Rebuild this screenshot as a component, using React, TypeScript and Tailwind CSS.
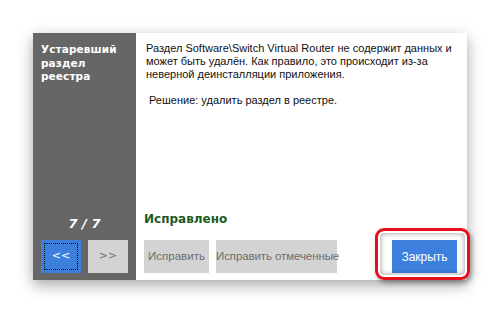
export default function App() {
  return (
    <div
      className="relative w-[500px] h-[313px] bg-white overflow-hidden"
      style={{ fontFamily: '"DejaVu Sans", Tahoma, sans-serif' }}
    >
      <div className="absolute left-[33px] top-[33px] w-[434px] h-[247px] flex shadow-[0_5px_14px_rgba(0,0,0,0.35)]">
        <div className="w-[103px] bg-[#666666] flex flex-col px-[8px] pb-[7px] pt-[10px]">
          <div className="text-white font-bold text-[10.5px] leading-[13.5px] tracking-[0.1px]">
            Устаревший
            <br />
            раздел
            <br />
            реестра
          </div>
          <div className="flex-1" />
          <div className="text-white font-bold italic text-[13px] text-center mb-[9px] leading-[14px]">
            7 / 7
          </div>
          <div className="flex gap-[7px]">
            <button className="w-[41px] h-[33px] bg-[#3d7fdc] p-[3px]">
              <div className="w-full h-full border border-dotted border-black flex items-center justify-center text-white text-[11px]">
                &lt;&lt;
              </div>
            </button>
            <button className="w-[41px] h-[33px] bg-[#d3d3d3] flex items-center justify-center text-[#707070] text-[11px]">
              &gt;&gt;
            </button>
          </div>
        </div>
        <div className="flex-1 bg-white flex flex-col pl-[8px] pr-[10px] pb-[7px] pt-[9px]">
          <div
            className="pl-[2px] text-[#111] text-[11px] leading-[13px]"
            style={{ fontFamily: '"Liberation Sans", Tahoma, sans-serif' }}
          >
            Раздел Software\Switch Virtual Router не содержит данных и
            <br />
            может быть удалён. Как правило, это происходит из-за
            <br />
            неверной деинсталляции приложения.
            <br />
            <br />
            <span className="pl-[3px]">Решение: удалить раздел в реестре.</span>
          </div>
          <div className="flex-1" />
          <div className="text-[#1c5a1c] font-bold text-[12px] leading-[14px] mb-[14px]">
            Исправлено
          </div>
          <div className="flex items-end">
            <button
              className="w-[65px] h-[33px] bg-[#d3d3d3] text-[#6e6e6e] text-[11.5px]"
              style={{ fontFamily: '"Liberation Sans", Tahoma, sans-serif' }}
            >
              Исправить
            </button>
            <button
              className="ml-[7px] w-[121px] h-[33px] bg-[#d3d3d3] text-[#6e6e6e] text-[11.5px] whitespace-nowrap tracking-[-0.1px]"
              style={{ fontFamily: '"Liberation Sans", Tahoma, sans-serif' }}
            >
              Исправить отмеченные
            </button>
            <div className="flex-1" />
            <button
              className="w-[65px] h-[33px] bg-[#3d7fdc] text-white text-[12px]"
              style={{ fontFamily: '"Liberation Sans", Tahoma, sans-serif' }}
            >
              Закрыть
            </button>
          </div>
        </div>
      </div>
      <div className="absolute left-[375px] top-[228px] w-[95px] h-[52px] rounded-[9px] border-[3px] border-[#e5101c] shadow-[inset_0_0_0_2px_#ffffff,inset_0_0_5px_3px_rgba(0,0,0,0.3),2px_3px_5px_rgba(0,0,0,0.35)]" />
    </div>
  );
}
